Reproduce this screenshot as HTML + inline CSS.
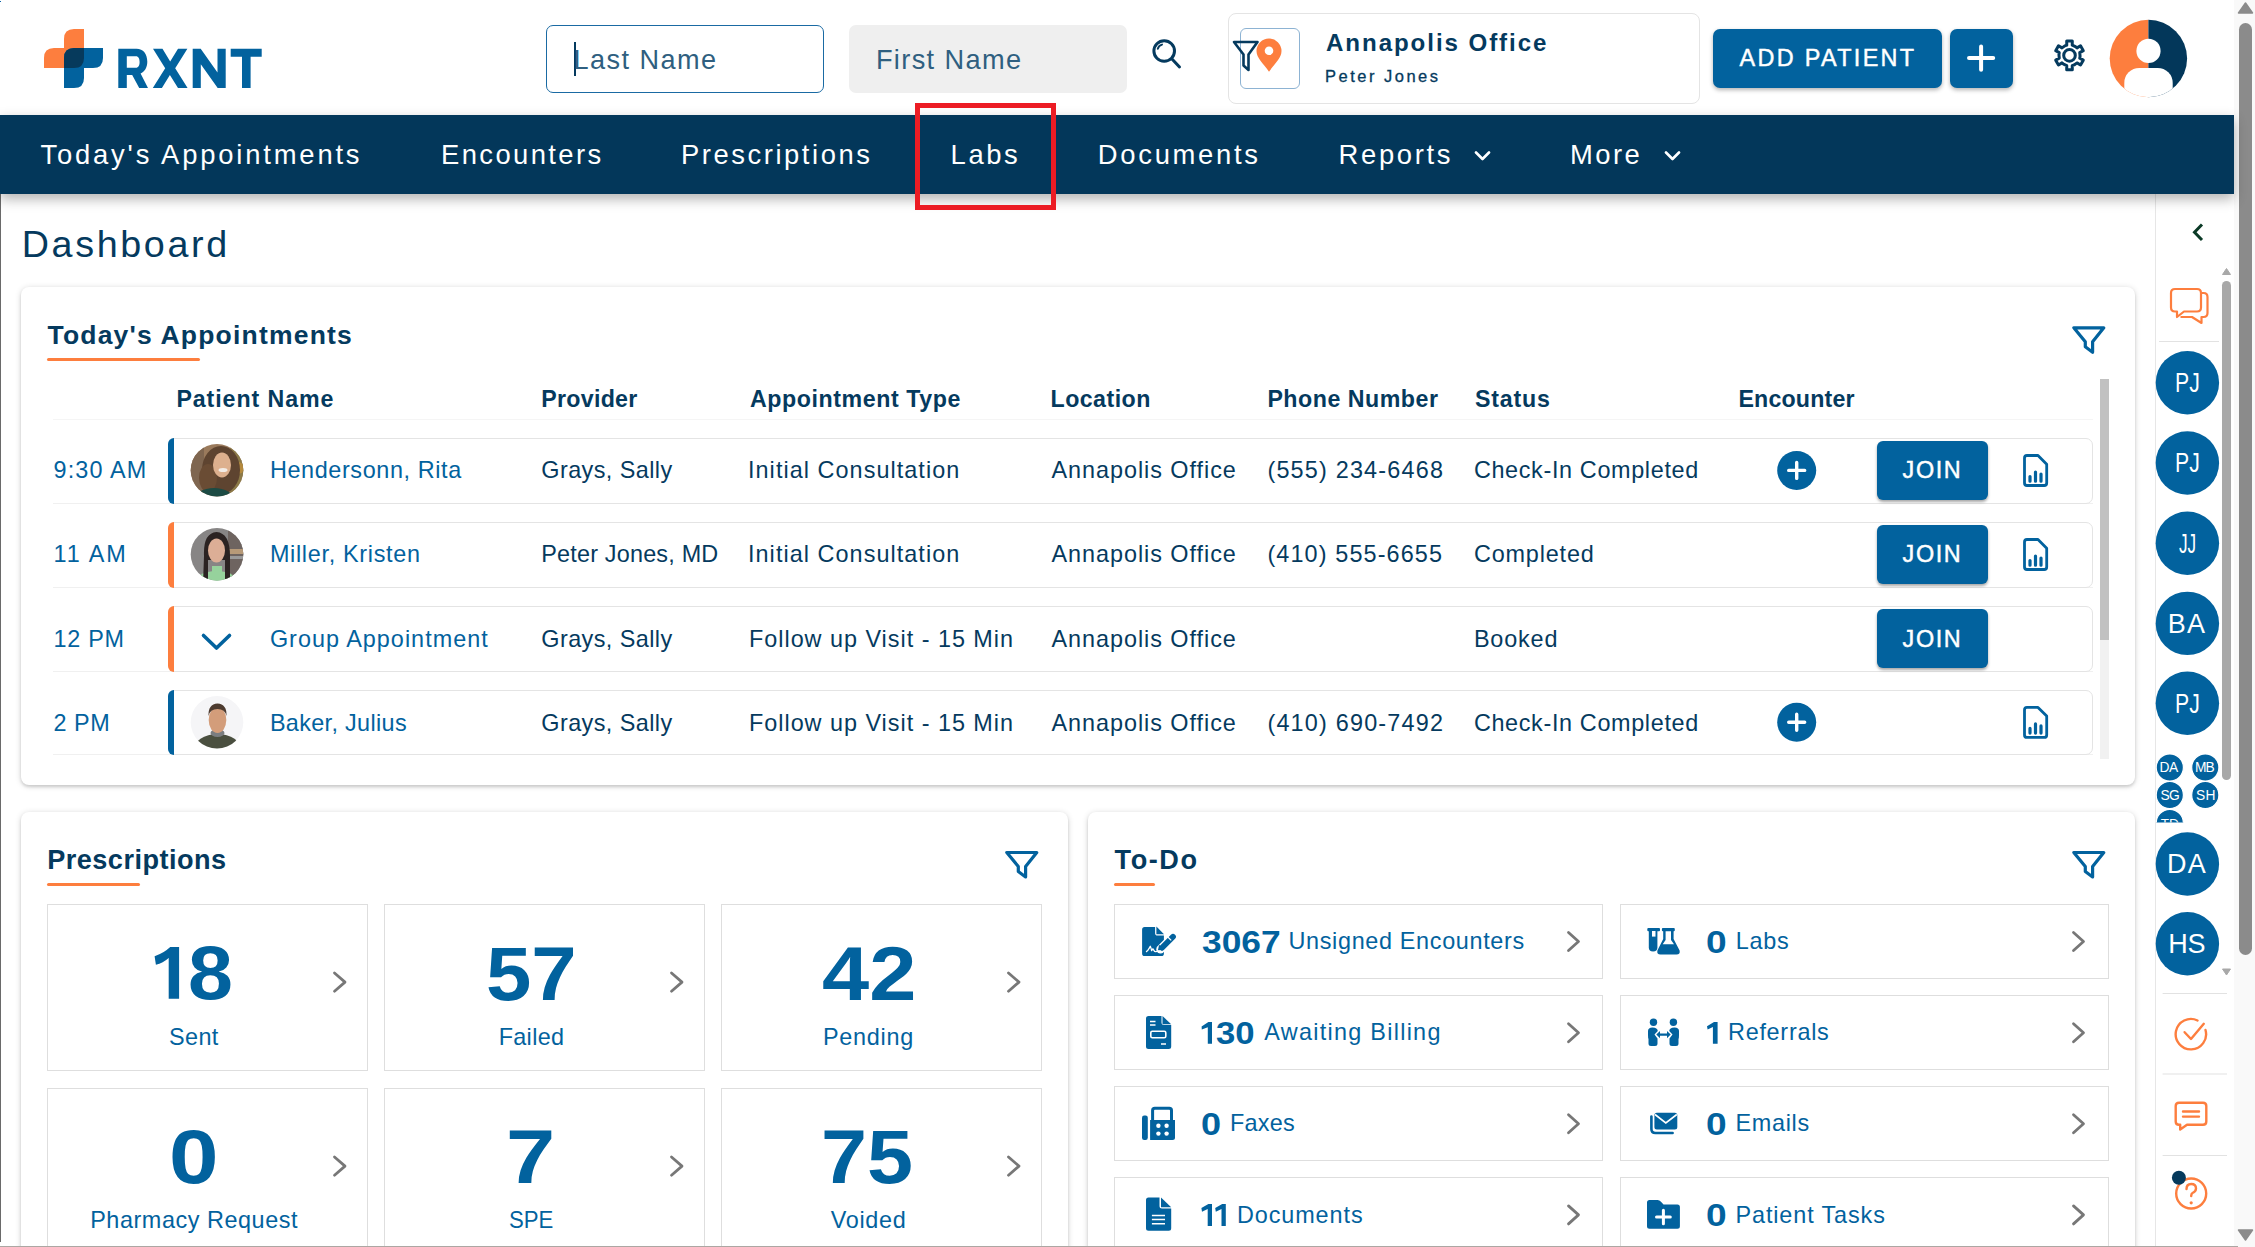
<!DOCTYPE html>
<html><head><meta charset="utf-8"><title>RXNT Dashboard</title>
<style>
*{margin:0;padding:0;box-sizing:border-box}
html,body{width:2255px;height:1247px;overflow:hidden;background:#fff;font-family:"Liberation Sans",sans-serif}
body{position:relative}
.a{position:absolute}
.t{position:absolute;white-space:nowrap;font-family:"Liberation Sans",sans-serif}
.card{position:absolute;background:#fff;border-radius:8px;box-shadow:0 1px 6px rgba(0,0,0,0.16),0 2px 3px rgba(0,0,0,0.12)}
.row{position:absolute;left:168px;width:1925px;height:66px;border:1px solid #e4e4e4;border-radius:7px;background:#fff}
.row .bar{position:absolute;left:-1px;top:-1px;bottom:-1px;width:6px;border-radius:7px 0 0 7px}
.rline{position:absolute;left:53px;width:2040px;height:1px;background:#f0f0f0}
.join{position:absolute;left:1877px;width:111px;height:59px;background:#02629e;border-radius:6px;box-shadow:0 2px 3px rgba(0,0,0,0.35)}
.tile{position:absolute;border:1px solid #dedede;background:#fff}
.sbar{position:absolute}
</style></head><body>
<div class="a" style="left:0;top:1px;width:1.2px;height:1.2px;background:#0a62a8"></div>
<!-- page background -->
<div class="a" style="left:0;top:194px;width:2155px;height:1053px;background:#fff"></div>
<div class="a" style="left:2155px;top:194px;width:79px;height:1053px;background:#fff;border-left:1px solid #e6e6e6"></div>
<!-- main scrollbar track -->
<div class="a" style="left:2234px;top:0;width:21px;height:1247px;background:#f9f9f9"></div>
<div class="a" style="left:2239px;top:23px;width:13px;height:932px;background:#8b8b8b;border-radius:6.5px"></div>
<!-- header inputs -->
<div class="a" style="left:546px;top:25px;width:278px;height:68px;border:1.5px solid #1a6aa3;border-radius:7px;background:#fff"></div>
<div class="a" style="left:574px;top:42px;width:2px;height:34px;background:#053a5e"></div>
<div class="a" style="left:849px;top:25px;width:278px;height:68px;background:#efefef;border-radius:7px"></div>
<!-- location card -->
<div class="a" style="left:1228px;top:13px;width:472px;height:91px;border:1px solid #e4e4e4;border-radius:8px;background:#fff"></div>
<div class="a" style="left:1240px;top:28px;width:60px;height:61px;border:1px solid #8db3d3;border-radius:6px;background:#fff"></div>
<!-- buttons -->
<div class="a" style="left:1713px;top:29px;width:229px;height:59px;background:#02629e;border-radius:7px;box-shadow:0 2px 4px rgba(0,0,0,0.3)"></div>
<div class="a" style="left:1950px;top:29px;width:63px;height:59px;background:#02629e;border-radius:7px;box-shadow:0 2px 4px rgba(0,0,0,0.3)"></div>
<!-- left dark line -->
<div class="a" style="left:0;top:194px;width:1px;height:1048px;background:#6a6a6a"></div>
<!-- nav -->
<div class="a" style="left:0;top:115px;width:2234px;height:79px;background:#03375a;box-shadow:0 5px 12px rgba(0,0,0,0.3)"></div>
<!-- red highlight box -->
<div class="a" style="left:915px;top:103px;width:141px;height:107px;border:5px solid #ec1c24"></div>

<!-- cards -->
<div class="card" style="left:21px;top:287px;width:2114px;height:498px"></div>
<div class="card" style="left:21px;top:812px;width:1047px;height:480px"></div>
<div class="card" style="left:1088px;top:812px;width:1047px;height:480px"></div>

<!-- orange underlines -->
<div class="a" style="left:47px;top:358px;width:153px;height:3px;background:#fd7e3e;border-radius:2px"></div>
<div class="a" style="left:47px;top:883px;width:93px;height:3px;background:#fd7e3e;border-radius:2px"></div>
<div class="a" style="left:1114px;top:883px;width:41px;height:3px;background:#fd7e3e;border-radius:2px"></div>

<!-- table -->
<div class="rline" style="top:419px;background:#f5f5f5"></div>
<div class="rline" style="top:503px"></div>
<div class="rline" style="top:587px"></div>
<div class="rline" style="top:671px"></div>
<div class="rline" style="top:754px"></div>
<div class="row" style="top:437.5px"><div class="bar" style="background:#02629e"></div></div>
<div class="row" style="top:521.5px"><div class="bar" style="background:#fd7e3e"></div></div>
<div class="row" style="top:605.5px"><div class="bar" style="background:#fd7e3e"></div></div>
<div class="row" style="top:689.5px;height:65px"><div class="bar" style="background:#02629e"></div></div>
<div class="join" style="top:441px"></div>
<div class="join" style="top:525px"></div>
<div class="join" style="top:609px"></div>
<!-- table scrollbar -->
<div class="a" style="left:2100px;top:379px;width:9px;height:380px;background:#f1f1f1"></div>
<div class="a" style="left:2100px;top:379px;width:9px;height:261px;background:#c1c1c1"></div>

<!-- prescriptions tiles -->
<div class="tile" style="left:47px;top:904px;width:321px;height:167px"></div>
<div class="tile" style="left:384px;top:904px;width:321px;height:167px"></div>
<div class="tile" style="left:721px;top:904px;width:321px;height:167px"></div>
<div class="tile" style="left:47px;top:1088px;width:321px;height:167px"></div>
<div class="tile" style="left:384px;top:1088px;width:321px;height:167px"></div>
<div class="tile" style="left:721px;top:1088px;width:321px;height:167px"></div>
<!-- todo tiles -->
<div class="tile" style="left:1114px;top:904px;width:489px;height:75px"></div>
<div class="tile" style="left:1620px;top:904px;width:489px;height:75px"></div>
<div class="tile" style="left:1114px;top:995px;width:489px;height:75px"></div>
<div class="tile" style="left:1620px;top:995px;width:489px;height:75px"></div>
<div class="tile" style="left:1114px;top:1086px;width:489px;height:75px"></div>
<div class="tile" style="left:1620px;top:1086px;width:489px;height:75px"></div>
<div class="tile" style="left:1114px;top:1177px;width:489px;height:75px"></div>
<div class="tile" style="left:1620px;top:1177px;width:489px;height:75px"></div>

<!-- bottom line -->
<div class="a" style="left:0;top:1245.6px;width:2238px;height:1.4px;background:#aca7a3"></div>

<svg class="a" style="left:0;top:0" width="2255" height="1247" viewBox="0 0 2255 1247">
<defs>
 <clipPath id="avc"><circle cx="2148.4" cy="58.5" r="38.7"/></clipPath>
 <clipPath id="sbclip"><rect x="2150" y="280" width="75" height="542.6"/></clipPath>
 <clipPath id="a1"><circle cx="217" cy="470.3" r="26.3"/></clipPath>
 <clipPath id="a2"><circle cx="217" cy="554.3" r="26.3"/></clipPath>
 <clipPath id="a4"><circle cx="217" cy="722.3" r="26.3"/></clipPath>
</defs>
<!-- logo -->
<path d="M64,39 Q64,29 74,29 H84 V58 Q84,68 74,68 H44 V58 Q44,48 54,48 H64 Z" fill="#fd7e3e"/>
<path d="M64,58 Q64,48 74,48 H103 V58 Q103,68 93,68 H84 V78 Q84,88 74,88 H64 Z" fill="#02629e"/>
<path d="M64,58 Q64,48 74,48 H84 V58 Q84,68 74,68 H64 Z" fill="#063a5c"/>
<g fill="#02629e">
 <path fill-rule="evenodd" d="M118.3,48.8 H136.5 C143.3,48.8 147.3,54 147.3,61.8 C147.3,67.6 144.6,71.8 140.6,73.6 L148,88 H139.2 L132.2,75 H126.8 V88 H118.3 Z M126.8,56.2 V67.8 H135.8 C138.6,67.8 139.6,65.2 139.6,62 C139.6,58.8 138.6,56.2 135.8,56.2 Z"/>
 <path d="M153,48.8 H162.5 L170.2,61.4 L178,48.8 H187.4 L175.2,68.2 L187.6,88 H178 L169.9,75 L161.9,88 H152.8 L165.2,68.2 Z"/>
 <path d="M192.7,48.8 H200.7 L217.5,72.5 V48.8 H225.7 V88 H217.7 L200.8,64.2 V88 H192.7 Z"/>
 <path d="M230.7,48.8 H261.7 V56.8 H250.6 V88 H242 V56.8 H230.7 Z"/>
</g>
<!-- search -->
<g fill="none" stroke="#053a5e" stroke-width="3" stroke-linecap="round">
 <circle cx="1164.2" cy="51" r="10.3"/>
 <path d="M1172,59 L1179.5,67"/>
 <path d="M1157.8,48.8 Q1158.6,45.6 1162,44.6" stroke-width="2"/>
</g>
<!-- location funnel + pin -->
<path d="M1234,42 H1257.5 L1248.5,54.5 V70 L1243.5,65.5 V54.5 Z" fill="none" stroke="#053a5e" stroke-width="2.6" stroke-linejoin="round"/>
<path d="M1269,71.7 C1263,63 1256.5,58 1256.5,51 A12.5,12.5 0 0 1 1281.5,51 C1281.5,58 1275,63 1269,71.7 Z" fill="#fd7e3e"/>
<circle cx="1269" cy="50.8" r="4.3" fill="#fff"/>
<!-- plus btn -->
<path d="M1969,58.1 H1993.2 M1981.1,46.4 V69.8" stroke="#fff" stroke-width="4" stroke-linecap="round"/>
<!-- gear -->
<path d="M2064.85,45.87 L2066.76,45.16 L2066.71,41.07 L2072.29,41.07 L2072.24,45.16 L2075.43,46.61 L2077.00,47.90 L2080.52,45.82 L2083.30,50.65 L2079.74,52.66 L2080.07,56.14 L2079.74,58.14 L2083.30,60.15 L2080.52,64.98 L2077.00,62.90 L2074.15,64.93 L2072.24,65.64 L2072.29,69.73 L2066.71,69.73 L2066.76,65.64 L2063.57,64.19 L2062.00,62.90 L2058.48,64.98 L2055.70,60.15 L2059.26,58.14 L2058.93,54.66 L2059.26,52.66 L2055.70,50.65 L2058.48,45.82 L2062.00,47.90 Z" fill="none" stroke="#053a5e" stroke-width="3" stroke-linejoin="round"/>
<circle cx="2069.5" cy="55.4" r="5.8" fill="none" stroke="#053a5e" stroke-width="3"/>
<!-- avatar -->
<g clip-path="url(#avc)">
 <rect x="2108" y="18" width="40.4" height="82" fill="#fd7e3e"/>
 <rect x="2148.4" y="18" width="40" height="82" fill="#03375a"/>
 <circle cx="2148.5" cy="50.9" r="12.1" fill="#fff"/>
 <rect x="2124.3" y="67.9" width="48.4" height="50" rx="15" fill="#fff"/>
</g>
<!-- nav chevrons -->
<path d="M1476,152.5 L1482.5,159 L1489,152.5 M1666,152.5 L1672.5,159 L1679,152.5" fill="none" stroke="#fff" stroke-width="2.6" stroke-linecap="round" stroke-linejoin="round"/>
<!-- filters -->
<g fill="none" stroke="#02629e" stroke-width="3.2" stroke-linejoin="round">
 <path id="flt" d="M1006.8,852.5 H1036.8 L1025.6,866.5 V877 L1018.3,871.5 V866.5 Z"/>
 <path d="M1006.8,852.5 H1036.8 L1025.6,866.5 V877 L1018.3,871.5 V866.5 Z" transform="translate(1067,0)"/>
 <path d="M1006.8,852.5 H1036.8 L1025.6,866.5 V877 L1018.3,871.5 V866.5 Z" transform="translate(1067,-524.7)"/>
</g>
<!-- table avatars -->
<g clip-path="url(#a1)">
 <rect x="190" y="443" width="54" height="54" fill="#9a7a5c"/>
 <rect x="190" y="443" width="14" height="54" fill="#7f6650"/>
 <rect x="230" y="443" width="14" height="54" fill="#8c7a48"/>
 <circle cx="238" cy="468" r="6" fill="#b58a3e"/>
 <ellipse cx="221" cy="470" rx="19" ry="24" fill="#5e4430"/>
 <ellipse cx="208" cy="478" rx="9" ry="14" fill="#6a4c34"/>
 <ellipse cx="222" cy="465" rx="9" ry="12.5" fill="#ddb08e"/>
 <ellipse cx="223" cy="470" rx="4.5" ry="2" fill="#f3ece6"/>
 <ellipse cx="214" cy="500" rx="20" ry="12" fill="#1c4b44"/>
</g>
<g clip-path="url(#a2)">
 <rect x="190" y="527" width="54" height="54" fill="#878585"/>
 <rect x="228" y="527" width="16" height="54" fill="#6e6460"/>
 <rect x="229" y="549" width="15" height="5" fill="#b79a78"/>
 <rect x="229" y="556" width="15" height="3" fill="#9a9a9a"/>
 <ellipse cx="216.5" cy="585" rx="23" ry="14" fill="#96d29c"/>
 <path d="M204,556 Q203,533 216.5,532 Q230,533 230,556 V584 H225 V560 H208 V584 H203 Z" fill="#2b2322"/>
 <ellipse cx="216.5" cy="550.5" rx="8.5" ry="12" fill="#dcae96"/>
 <rect x="212" y="566" width="10" height="15" fill="#96d29c"/>
</g>
<g clip-path="url(#a4)">
 <rect x="190" y="695" width="54" height="54" fill="#f5f5f7"/>
 <ellipse cx="217.5" cy="750" rx="24" ry="16" fill="#4a4f3f"/>
 <ellipse cx="217.5" cy="733" rx="7" ry="4" fill="#7a7d80"/>
 <ellipse cx="217.5" cy="720" rx="8.8" ry="13" fill="#d39d7a"/>
 <path d="M208.5,716 Q208,704 217.5,703.5 Q227,704 226.5,716 Q225,709 217.5,709 Q210,709 208.5,716 Z" fill="#4d3b30"/>
</g>
<!-- group chevron -->
<path d="M203.5,635.5 L216.5,648 L229.5,635.5" fill="none" stroke="#02629e" stroke-width="3.6" stroke-linecap="round" stroke-linejoin="round"/>
<!-- plus circles -->
<g>
 <circle cx="1796.7" cy="470.4" r="19.5" fill="#02629e"/>
 <path d="M1788.7,470.4 H1804.7 M1796.7,462.4 V478.4" stroke="#fff" stroke-width="3.4" stroke-linecap="round"/>
 <circle cx="1796.7" cy="722.3" r="19.5" fill="#02629e"/>
 <path d="M1788.7,722.3 H1804.7 M1796.7,714.3 V730.3" stroke="#fff" stroke-width="3.4" stroke-linecap="round"/>
</g>
<!-- doc chart icons -->
<g fill="none" stroke="#02629e" stroke-width="2.8" stroke-linecap="round" stroke-linejoin="round">
 <path d="M2027,455.5 H2038 L2046.7,464.2 V483 Q2046.7,485.5 2044.2,485.5 H2027 Q2024.5,485.5 2024.5,483 V458 Q2024.5,455.5 2027,455.5 Z"/><path d="M2030,476.5 V481.2 M2035.5,472 V481.2 M2041,474 V481.2" stroke-width="3.2"/>
 <path d="M2027,455.5 H2038 L2046.7,464.2 V483 Q2046.7,485.5 2044.2,485.5 H2027 Q2024.5,485.5 2024.5,483 V458 Q2024.5,455.5 2027,455.5 Z" transform="translate(0,84)"/><path d="M2030,476.5 V481.2 M2035.5,472 V481.2 M2041,474 V481.2" stroke-width="3.2" transform="translate(0,84)"/>
 <path d="M2027,455.5 H2038 L2046.7,464.2 V483 Q2046.7,485.5 2044.2,485.5 H2027 Q2024.5,485.5 2024.5,483 V458 Q2024.5,455.5 2027,455.5 Z" transform="translate(0,251.9)"/><path d="M2030,476.5 V481.2 M2035.5,472 V481.2 M2041,474 V481.2" stroke-width="3.2" transform="translate(0,251.9)"/>
</g>
<!-- tile chevrons -->
<g fill="none" stroke="#777" stroke-width="2.8" stroke-linecap="round" stroke-linejoin="round">
 <path d="M334.5,973 L345,982.1 L334.5,991.2"/>
 <path d="M334.5,973 L345,982.1 L334.5,991.2" transform="translate(337,0)"/>
 <path d="M334.5,973 L345,982.1 L334.5,991.2" transform="translate(674,0)"/>
 <path d="M334.5,973 L345,982.1 L334.5,991.2" transform="translate(0,184)"/>
 <path d="M334.5,973 L345,982.1 L334.5,991.2" transform="translate(337,184)"/>
 <path d="M334.5,973 L345,982.1 L334.5,991.2" transform="translate(674,184)"/>
 <path d="M1568.5,932.5 L1578.5,941.5 L1568.5,950.5"/>
 <path d="M1568.5,932.5 L1578.5,941.5 L1568.5,950.5" transform="translate(505,0)"/>
 <path d="M1568.5,932.5 L1578.5,941.5 L1568.5,950.5" transform="translate(0,91.3)"/>
 <path d="M1568.5,932.5 L1578.5,941.5 L1568.5,950.5" transform="translate(505,91.3)"/>
 <path d="M1568.5,932.5 L1578.5,941.5 L1568.5,950.5" transform="translate(0,182.3)"/>
 <path d="M1568.5,932.5 L1578.5,941.5 L1568.5,950.5" transform="translate(505,182.3)"/>
 <path d="M1568.5,932.5 L1578.5,941.5 L1568.5,950.5" transform="translate(0,273.4)"/>
 <path d="M1568.5,932.5 L1578.5,941.5 L1568.5,950.5" transform="translate(505,273.4)"/>
</g>
<g fill="#02629e">
 <!-- sign doc -->
 <path d="M1144.6,926.9 H1155.1 V933 Q1155.1,935.6 1157.7,935.6 H1163.9 V953.4 Q1163.9,956 1161.3,956 H1144.7 Q1142.1,956 1142.1,953.4 V929.5 Q1142.1,926.9 1144.6,926.9 Z"/>
 <path d="M1156.4,926.6 L1164,934.3 H1156.4 Z"/>
 <path d="M1173,936.8 L1160.5,949.3" stroke="#fff" stroke-width="8.4" stroke-linecap="round"/>
 <path d="M1173,936.8 L1162,947.8" stroke="#02629e" stroke-width="5.8" stroke-linecap="round"/>
 <path d="M1157.9,950.4 L1159.1,944.8 L1163.5,949.2 Z"/>
 <path d="M1165.8,935 L1171.2,940.4" stroke="#fff" stroke-width="1.3"/>
 <path d="M1146,951.8 Q1148,951 1149,948.6 L1150.3,946.2 Q1151.2,948.2 1151.6,950.6 L1152.9,948.8 L1154.6,951.3 Q1157,952 1158.6,950.6" fill="none" stroke="#fff" stroke-width="1.3" stroke-linejoin="round"/>
 <!-- billing doc -->
 <path d="M1148.5,1016 H1161.5 V1022.5 Q1161.5,1025 1164,1025 H1171.2 V1046.5 Q1171.2,1049 1168.7,1049 H1148.5 Q1146,1049 1146,1046.5 V1018.5 Q1146,1016 1148.5,1016 Z"/>
 <path d="M1162.5,1016 L1171.2,1024.2 H1162.5 Z"/>
 <g fill="none" stroke="#fff" stroke-width="1.6">
  <path d="M1150,1021.5 H1155.5 M1150,1025 H1155.5 M1161,1044 H1166"/>
  <rect x="1150.8" y="1031.2" width="15" height="6.6" rx="1.5"/>
 </g>
 <!-- fax -->
 <rect x="1142" y="1115.5" width="5.8" height="24.5" rx="2.2"/>
 <path d="M1150.1,1120 H1175 V1137.5 Q1175,1140 1172.5,1140 H1150.1 Z"/>
 <path d="M1152.6,1120 V1110.5 Q1152.6,1108.3 1154.8,1108.3 H1169.3 Q1171.5,1108.3 1171.5,1110.5 V1120" fill="none" stroke="#02629e" stroke-width="3"/>
 <g fill="#fff"><circle cx="1158.4" cy="1125.8" r="2.2"/><circle cx="1166.6" cy="1125.8" r="2.2"/><circle cx="1158.4" cy="1133.6" r="2.2"/><circle cx="1166.6" cy="1133.6" r="2.2"/></g>
 <!-- document -->
 <path d="M1148.5,1197.5 H1159.5 V1206 Q1159.5,1208.5 1162,1208.5 H1171.2 V1228.3 Q1171.2,1230.8 1168.7,1230.8 H1148.5 Q1146,1230.8 1146,1228.3 V1200 Q1146,1197.5 1148.5,1197.5 Z"/>
 <path d="M1161,1197.5 L1171.2,1207.2 H1161 Z"/>
 <path d="M1151.9,1215.4 H1165 M1151.9,1219.5 H1165 M1151.9,1223.7 H1165" stroke="#fff" stroke-width="1.5"/>
 <!-- labs -->
 <rect x="1647.3" y="928.1" width="12.7" height="3.2" rx="1"/>
 <path d="M1648.8,931 H1657.4 V947.5 Q1657.4,951.5 1653.1,951.5 Q1648.8,951.5 1648.8,947.5 Z"/>
 <rect x="1652" y="931" width="3.5" height="5.6" fill="#fff"/>
 <rect x="1661.9" y="928.1" width="12.9" height="3.2" rx="1"/>
 <path d="M1663.2,931 H1673.6 V939 L1679.6,950.5 Q1680.5,954.6 1676.5,954.6 H1660.5 Q1656.5,954.6 1657.4,950.5 L1663.2,939 Z"/>
 <path d="M1665.6,931.3 H1671 V940 L1674,944.2 H1662.7 L1665.6,940 Z" fill="#fff"/>
 <!-- referrals -->
 <circle cx="1653.5" cy="1022.3" r="3.7"/>
 <circle cx="1673.4" cy="1022.3" r="3.7"/>
 <path d="M1652.5,1027.5 Q1657.5,1027.5 1657.8,1031 L1654.5,1034.6 L1657.5,1038.5 V1043.5 Q1657.5,1046 1655,1046 H1651 Q1648.5,1046 1648.5,1043.5 V1039 Q1648,1038 1648,1035 V1031 Q1648,1027.5 1652.5,1027.5 Z"/>
 <path d="M1674.5,1027.5 Q1669.5,1027.5 1669.2,1031 L1672.5,1034.6 L1669.5,1038.5 V1043.5 Q1669.5,1046 1672,1046 H1676 Q1678.5,1046 1678.5,1043.5 V1039 Q1679,1038 1679,1035 V1031 Q1679,1027.5 1674.5,1027.5 Z"/>
 <path d="M1656.3,1034.6 L1660,1031 V1033.4 H1667 V1031 L1670.7,1034.6 L1667,1038.2 V1035.8 H1660 V1038.2 Z"/>
 <!-- email -->
 <path d="M1651.4,1116.5 V1129 Q1651.4,1133 1655.4,1133 H1672.6" fill="none" stroke="#02629e" stroke-width="2.6" stroke-linecap="round"/>
 <rect x="1654.4" y="1112.7" width="22.9" height="16.7" rx="2.5"/>
 <path d="M1655,1114.5 L1665.8,1123 L1676.8,1114.5" fill="none" stroke="#fff" stroke-width="1.6"/>
 <!-- folder plus -->
 <path d="M1649.5,1200 H1657.5 Q1659.5,1200 1661,1201.7 L1663.5,1204.5 H1677.4 Q1679.9,1204.5 1679.9,1207 V1226.2 Q1679.9,1228.7 1677.4,1228.7 H1649.5 Q1647,1228.7 1647,1226.2 V1202.5 Q1647,1200 1649.5,1200 Z"/>
 <path d="M1656.5,1217 H1670.3 M1663.4,1210.2 V1223.8" stroke="#fff" stroke-width="3" stroke-linecap="round"/>
</g>

<!-- sidebar chevron -->
<path d="M2202,224.5 L2194.5,232.2 L2202,240" fill="none" stroke="#0b3a26" stroke-width="3"/>
<!-- sidebar scrollbar -->
<path d="M2226.5,268.5 L2230.5,274.5 H2222.5 Z" fill="#a8a8a8" stroke="#a8a8a8" stroke-width="1" stroke-linejoin="round"/>
<rect x="2222" y="281" width="9" height="499" rx="4.5" fill="#a8a8a8"/>
<path d="M2226.5,975 L2230.5,969 H2222.5 Z" fill="#a8a8a8" stroke="#a8a8a8" stroke-width="1" stroke-linejoin="round"/>
<!-- chat icon -->
<g fill="none" stroke="#fd7e3e" stroke-width="2.2" stroke-linejoin="round">
 <path d="M2175,289 H2197 Q2201,289 2201,293 V307.5 Q2201,311.5 2197,311.5 H2184 L2177,317 V311.5 H2175 Q2171,311.5 2171,307.5 V293 Q2171,289 2175,289 Z"/>
 <path d="M2201,293 H2203.5 Q2207.5,293 2207.5,297 V313 Q2207.5,317 2203.5,317 H2201.5 V323 L2192,317 H2180.5"/>
</g>
<rect x="2159" y="341" width="60" height="1" fill="#e2e2e2"/>
<!-- avatars -->
<g fill="#02629e">
 <circle cx="2187.4" cy="382.7" r="31.7"/>
 <circle cx="2187.4" cy="463" r="31.7"/>
 <circle cx="2187.4" cy="543.2" r="31.7"/>
 <circle cx="2187.4" cy="623.4" r="31.7"/>
 <circle cx="2187.4" cy="703.3" r="31.7"/>
 <g clip-path="url(#sbclip)">
  <g stroke="#fff" stroke-width="1.2">
  <circle cx="2169.8" cy="823" r="13.6"/>
  <circle cx="2169.8" cy="795" r="13.6"/>
  <circle cx="2205.3" cy="795" r="13.6"/>
  <circle cx="2169.8" cy="767.5" r="13.6"/>
  <circle cx="2205.3" cy="767.5" r="13.6"/>
  </g>
  <text x="2169.8" y="827.5" fill="#fff" font-family="Liberation Sans" font-size="13.6" text-anchor="middle">TD</text>
 </g>
 <circle cx="2187.4" cy="864" r="31.7"/>
 <circle cx="2187.4" cy="943.8" r="31.7"/>
</g>
<rect x="2162.6" y="993" width="64.4" height="1" fill="#e2e2e2"/>
<rect x="2162.6" y="1073.5" width="64.4" height="1" fill="#e2e2e2"/>
<rect x="2162.6" y="1155" width="64.4" height="1" fill="#e2e2e2"/>
<g fill="none" stroke="#fd7e3e" stroke-width="2.4" stroke-linecap="round" stroke-linejoin="round">
 <path d="M2205.5,1030 A15.2,15.2 0 1 1 2197.5,1020.5"/>
 <path d="M2184.6,1032.2 L2191,1039 L2203.8,1023.8"/>
 <path d="M2179,1102.8 H2203 Q2206.3,1102.8 2206.3,1106.1 V1121.5 Q2206.3,1124.8 2203,1124.8 H2187 L2180.2,1129.6 V1124.8 H2179 Q2175.7,1124.8 2175.7,1121.5 V1106.1 Q2175.7,1102.8 2179,1102.8 Z"/>
 <path d="M2183,1111.5 H2199 M2183,1116.6 H2199"/>
 <circle cx="2191.2" cy="1193.5" r="15"/>
 <path d="M2186.5,1189 Q2186.5,1184 2191.2,1184 Q2196,1184 2196,1188.5 Q2196,1191.5 2192.5,1193 Q2191.2,1193.7 2191.2,1196"/>
</g>
<circle cx="2191.2" cy="1202.8" r="1.6" fill="#fd7e3e"/>
<circle cx="2178.9" cy="1177.7" r="7" fill="#063a5c"/>

<g fill="#02629e">
 <path d="M170.2,947 H179.1 V998.7 H168.7 V958 Q163,963 155.9,964.8 L154.6,956.2 Q164,953 170.2,947 Z"/>
 <path d="M1714,1022 H1717.6 V1043.8 H1712.9 V1027.1 L1707.6,1029.6 L1707,1026.2 Z"/>
 <path d="M1208.4,1022 H1212 V1043.8 H1207.8 V1027.3 L1201.8,1029.6 L1201.6,1026.4 Z"/>
 <path d="M1208.4,1204 H1212 V1225.9 H1207.7 V1209 L1202,1211.7 L1201.4,1208.1 Z"/>
 <path d="M1208.4,1204 H1212 V1225.9 H1207.7 V1209 L1202,1211.7 L1201.4,1208.1 Z" transform="translate(13.8,0)"/>
</g>
<!-- main scrollbar arrows -->
<path d="M2245.5,3 L2252.5,13 H2238.5 Z" fill="#8b8b8b" stroke="#8b8b8b" stroke-width="1.5" stroke-linejoin="round"/>
<path d="M2245.5,1240 L2252.5,1230 H2238.5 Z" fill="#8b8b8b" stroke="#8b8b8b" stroke-width="1.5" stroke-linejoin="round"/>
</svg>
<div class=t style="left:573.40px;top:46px;font-size:27.10px;line-height:27.10px;letter-spacing:1.457px;color:#2f5f80;">Last Name</div>
<div class=t style="left:875.90px;top:46px;font-size:27.20px;line-height:27.20px;letter-spacing:1.355px;color:#2f5f80;">First Name</div>
<div class=t style="left:1326.00px;top:31px;font-size:24.10px;line-height:24.10px;letter-spacing:1.931px;font-weight:700;color:#053a5e;">Annapolis Office</div>
<div class=t style="left:1325.00px;top:68px;font-size:16.50px;line-height:16.50px;letter-spacing:2.500px;color:#053a5e;-webkit-text-stroke:0.3px #053a5e;">Peter Jones</div>
<div class=t style="left:1739.50px;top:47px;font-size:23.40px;line-height:23.40px;letter-spacing:2.341px;color:#fff;-webkit-text-stroke:0.45px #fff;">ADD PATIENT</div>
<div class=t style="left:40.40px;top:141px;font-size:27.40px;line-height:27.40px;letter-spacing:2.820px;color:#fff;">Today's Appointments</div>
<div class=t style="left:441.00px;top:141px;font-size:27.40px;line-height:27.40px;letter-spacing:2.404px;color:#fff;">Encounters</div>
<div class=t style="left:681.00px;top:141px;font-size:27.40px;line-height:27.40px;letter-spacing:2.549px;color:#fff;">Prescriptions</div>
<div class=t style="left:950.60px;top:141px;font-size:27.40px;line-height:27.40px;letter-spacing:2.567px;color:#fff;">Labs</div>
<div class=t style="left:1097.80px;top:141px;font-size:27.40px;line-height:27.40px;letter-spacing:2.708px;color:#fff;">Documents</div>
<div class=t style="left:1338.60px;top:141px;font-size:27.40px;line-height:27.40px;letter-spacing:2.665px;color:#fff;">Reports</div>
<div class=t style="left:1570.00px;top:141px;font-size:27.40px;line-height:27.40px;letter-spacing:2.443px;color:#fff;">More</div>
<div class=t style="left:21.70px;top:226px;font-size:37.70px;line-height:37.70px;letter-spacing:2.649px;color:#053a5e;">Dashboard</div>
<div class=t style="left:47.50px;top:322px;font-size:26.50px;line-height:26.50px;letter-spacing:1.192px;font-weight:700;color:#053a5e;">Today's Appointments</div>
<div class=t style="left:176.40px;top:388px;font-size:23.20px;line-height:23.20px;letter-spacing:0.918px;font-weight:700;color:#053a5e;">Patient Name</div>
<div class=t style="left:541.30px;top:388px;font-size:23.20px;line-height:23.20px;letter-spacing:0.278px;font-weight:700;color:#053a5e;">Provider</div>
<div class=t style="left:749.90px;top:388px;font-size:23.20px;line-height:23.20px;letter-spacing:0.586px;font-weight:700;color:#053a5e;">Appointment Type</div>
<div class=t style="left:1050.50px;top:388px;font-size:23.20px;line-height:23.20px;letter-spacing:0.465px;font-weight:700;color:#053a5e;">Location</div>
<div class=t style="left:1267.40px;top:388px;font-size:23.20px;line-height:23.20px;letter-spacing:0.511px;font-weight:700;color:#053a5e;">Phone Number</div>
<div class=t style="left:1474.90px;top:388px;font-size:23.20px;line-height:23.20px;letter-spacing:0.826px;font-weight:700;color:#053a5e;">Status</div>
<div class=t style="left:1738.40px;top:388px;font-size:23.20px;line-height:23.20px;letter-spacing:0.183px;font-weight:700;color:#053a5e;">Encounter</div>
<div class=t style="left:53.50px;top:459px;font-size:23.40px;line-height:23.40px;letter-spacing:1.146px;color:#02629e;">9:30 AM</div>
<div class=t style="left:269.90px;top:459px;font-size:23.40px;line-height:23.40px;letter-spacing:0.619px;color:#02629e;">Hendersonn, Rita</div>
<div class=t style="left:541.30px;top:459px;font-size:23.40px;line-height:23.40px;letter-spacing:0.438px;color:#053a5e;">Grays, Sally</div>
<div class=t style="left:748.00px;top:459px;font-size:23.40px;line-height:23.40px;letter-spacing:1.057px;color:#053a5e;">Initial Consultation</div>
<div class=t style="left:1051.50px;top:459px;font-size:23.40px;line-height:23.40px;letter-spacing:0.960px;color:#053a5e;">Annapolis Office</div>
<div class=t style="left:1267.40px;top:459px;font-size:23.40px;line-height:23.40px;letter-spacing:1.197px;color:#053a5e;">(555) 234-6468</div>
<div class=t style="left:1473.90px;top:459px;font-size:23.40px;line-height:23.40px;letter-spacing:0.653px;color:#053a5e;">Check-In Completed</div>
<div class=t style="left:53.50px;top:543px;font-size:23.40px;line-height:23.40px;letter-spacing:1.905px;color:#02629e;">11 AM</div>
<div class=t style="left:269.90px;top:543px;font-size:23.40px;line-height:23.40px;letter-spacing:0.695px;color:#02629e;">Miller, Kristen</div>
<div class=t style="left:541.30px;top:543px;font-size:23.40px;line-height:23.40px;letter-spacing:0.193px;color:#053a5e;">Peter Jones, MD</div>
<div class=t style="left:748.00px;top:543px;font-size:23.40px;line-height:23.40px;letter-spacing:1.057px;color:#053a5e;">Initial Consultation</div>
<div class=t style="left:1051.50px;top:543px;font-size:23.40px;line-height:23.40px;letter-spacing:0.960px;color:#053a5e;">Annapolis Office</div>
<div class=t style="left:1267.40px;top:543px;font-size:23.40px;line-height:23.40px;letter-spacing:1.127px;color:#053a5e;">(410) 555-6655</div>
<div class=t style="left:1473.90px;top:543px;font-size:23.40px;line-height:23.40px;letter-spacing:0.849px;color:#053a5e;">Completed</div>
<div class=t style="left:53.50px;top:628px;font-size:23.40px;line-height:23.40px;letter-spacing:0.746px;color:#02629e;">12 PM</div>
<div class=t style="left:269.90px;top:628px;font-size:23.40px;line-height:23.40px;letter-spacing:1.016px;color:#02629e;">Group Appointment</div>
<div class=t style="left:541.30px;top:628px;font-size:23.40px;line-height:23.40px;letter-spacing:0.438px;color:#053a5e;">Grays, Sally</div>
<div class=t style="left:749.00px;top:628px;font-size:23.40px;line-height:23.40px;letter-spacing:0.985px;color:#053a5e;">Follow up Visit - 15 Min</div>
<div class=t style="left:1051.50px;top:628px;font-size:23.40px;line-height:23.40px;letter-spacing:0.960px;color:#053a5e;">Annapolis Office</div>
<div class=t style="left:1473.90px;top:628px;font-size:23.40px;line-height:23.40px;letter-spacing:0.835px;color:#053a5e;">Booked</div>
<div class=t style="left:53.50px;top:712px;font-size:23.40px;line-height:23.40px;letter-spacing:0.530px;color:#02629e;">2 PM</div>
<div class=t style="left:269.90px;top:712px;font-size:23.40px;line-height:23.40px;letter-spacing:0.340px;color:#02629e;">Baker, Julius</div>
<div class=t style="left:541.30px;top:712px;font-size:23.40px;line-height:23.40px;letter-spacing:0.438px;color:#053a5e;">Grays, Sally</div>
<div class=t style="left:749.00px;top:712px;font-size:23.40px;line-height:23.40px;letter-spacing:0.985px;color:#053a5e;">Follow up Visit - 15 Min</div>
<div class=t style="left:1051.50px;top:712px;font-size:23.40px;line-height:23.40px;letter-spacing:0.960px;color:#053a5e;">Annapolis Office</div>
<div class=t style="left:1267.40px;top:712px;font-size:23.40px;line-height:23.40px;letter-spacing:1.204px;color:#053a5e;">(410) 690-7492</div>
<div class=t style="left:1473.90px;top:712px;font-size:23.40px;line-height:23.40px;letter-spacing:0.653px;color:#053a5e;">Check-In Completed</div>
<div class=t style="left:1902.60px;top:459px;font-size:23.40px;line-height:23.40px;letter-spacing:1.604px;color:#fff;-webkit-text-stroke:0.45px #fff;">JOIN</div>
<div class=t style="left:1902.60px;top:543px;font-size:23.40px;line-height:23.40px;letter-spacing:1.604px;color:#fff;-webkit-text-stroke:0.45px #fff;">JOIN</div>
<div class=t style="left:1902.60px;top:628px;font-size:23.40px;line-height:23.40px;letter-spacing:1.604px;color:#fff;-webkit-text-stroke:0.45px #fff;">JOIN</div>
<div class=t style="left:47.20px;top:846px;font-size:27.10px;line-height:27.10px;letter-spacing:0.476px;font-weight:700;color:#053a5e;">Prescriptions</div>
<div class=t style="left:1114.60px;top:846px;font-size:27.10px;line-height:27.10px;letter-spacing:1.531px;font-weight:700;color:#053a5e;">To-Do</div>
<div class=t style="left:187.89px;top:935px;font-size:76.40px;line-height:76.40px;letter-spacing:0.000px;transform:scaleX(1.0564);transform-origin:0 0;font-weight:700;color:#02629e;">8</div>
<div class=t style="left:486.47px;top:936px;font-size:76.40px;line-height:76.40px;letter-spacing:0.000px;transform:scaleX(1.0673);transform-origin:0 0;font-weight:700;color:#02629e;">57</div>
<div class=t style="left:821.59px;top:936px;font-size:76.40px;line-height:76.40px;letter-spacing:0.000px;transform:scaleX(1.1106);transform-origin:0 0;font-weight:700;color:#02629e;">42</div>
<div class=t style="left:168.91px;top:1119px;font-size:76.40px;line-height:76.40px;letter-spacing:0.000px;transform:scaleX(1.1649);transform-origin:0 0;font-weight:700;color:#02629e;">0</div>
<div class=t style="left:506.23px;top:1119px;font-size:76.40px;line-height:76.40px;letter-spacing:0.000px;transform:scaleX(1.1568);transform-origin:0 0;font-weight:700;color:#02629e;">7</div>
<div class=t style="left:820.95px;top:1119px;font-size:76.40px;line-height:76.40px;letter-spacing:0.000px;transform:scaleX(1.0834);transform-origin:0 0;font-weight:700;color:#02629e;">75</div>
<div class=t style="left:169.00px;top:1026px;font-size:23.40px;line-height:23.40px;letter-spacing:0.394px;color:#02629e;">Sent</div>
<div class=t style="left:498.70px;top:1026px;font-size:23.40px;line-height:23.40px;letter-spacing:0.320px;color:#02629e;">Failed</div>
<div class=t style="left:822.90px;top:1026px;font-size:23.40px;line-height:23.40px;letter-spacing:0.761px;color:#02629e;">Pending</div>
<div class=t style="left:90.20px;top:1209px;font-size:23.40px;line-height:23.40px;letter-spacing:0.559px;color:#02629e;">Pharmacy Request</div>
<div class=t style="left:508.75px;top:1209px;font-size:23.40px;line-height:23.40px;letter-spacing:0.000px;transform:scaleX(0.9468);transform-origin:0 0;color:#02629e;">SPE</div>
<div class=t style="left:830.80px;top:1209px;font-size:23.40px;line-height:23.40px;letter-spacing:0.673px;color:#02629e;">Voided</div>
<div class=t style="left:1202.00px;top:926px;font-size:32.10px;line-height:32.10px;letter-spacing:0.000px;transform:scaleX(1.1018);transform-origin:0 0;font-weight:700;color:#02629e;">3067</div>
<div class=t style="left:1288.50px;top:930px;font-size:23.40px;line-height:23.40px;letter-spacing:0.669px;color:#02629e;">Unsigned Encounters</div>
<div class=t style="left:1706.34px;top:926px;font-size:32.10px;line-height:32.10px;letter-spacing:0.000px;transform:scaleX(1.1562);transform-origin:0 0;font-weight:700;color:#02629e;">0</div>
<div class=t style="left:1735.80px;top:930px;font-size:23.40px;line-height:23.40px;letter-spacing:0.725px;color:#02629e;">Labs</div>
<div class=t style="left:1216.00px;top:1017px;font-size:32.10px;line-height:32.10px;letter-spacing:0.000px;transform:scaleX(1.0821);transform-origin:0 0;font-weight:700;color:#02629e;">30</div>
<div class=t style="left:1264.30px;top:1021px;font-size:23.40px;line-height:23.40px;letter-spacing:1.281px;color:#02629e;">Awaiting Billing</div>
<div class=t style="left:1728.00px;top:1021px;font-size:23.40px;line-height:23.40px;letter-spacing:0.738px;color:#02629e;">Referrals</div>
<div class=t style="left:1201.28px;top:1108px;font-size:32.10px;line-height:32.10px;letter-spacing:0.000px;transform:scaleX(1.1250);transform-origin:0 0;font-weight:700;color:#02629e;">0</div>
<div class=t style="left:1230.00px;top:1112px;font-size:23.40px;line-height:23.40px;letter-spacing:0.250px;color:#02629e;">Faxes</div>
<div class=t style="left:1706.34px;top:1108px;font-size:32.10px;line-height:32.10px;letter-spacing:0.000px;transform:scaleX(1.1562);transform-origin:0 0;font-weight:700;color:#02629e;">0</div>
<div class=t style="left:1735.50px;top:1112px;font-size:23.40px;line-height:23.40px;letter-spacing:0.702px;color:#02629e;">Emails</div>
<div class=t style="left:1236.90px;top:1204px;font-size:23.40px;line-height:23.40px;letter-spacing:0.924px;color:#02629e;">Documents</div>
<div class=t style="left:1706.34px;top:1199px;font-size:32.10px;line-height:32.10px;letter-spacing:0.000px;transform:scaleX(1.1562);transform-origin:0 0;font-weight:700;color:#02629e;">0</div>
<div class=t style="left:1735.50px;top:1204px;font-size:23.40px;line-height:23.40px;letter-spacing:0.891px;color:#02629e;">Patient Tasks</div>
<div class=t style="left:2174.83px;top:370px;font-size:27.00px;line-height:27.00px;letter-spacing:0.000px;transform:scaleX(0.7855);transform-origin:0 0;color:#fff;">PJ</div>
<div class=t style="left:2174.83px;top:450px;font-size:27.00px;line-height:27.00px;letter-spacing:0.000px;transform:scaleX(0.7855);transform-origin:0 0;color:#fff;">PJ</div>
<div class=t style="left:2179.30px;top:531px;font-size:27.00px;line-height:27.00px;letter-spacing:0.000px;transform:scaleX(0.6353);transform-origin:0 0;color:#fff;">JJ</div>
<div class=t style="left:2167.75px;top:611px;font-size:27.00px;line-height:27.00px;letter-spacing:1.291px;color:#fff;">BA</div>
<div class=t style="left:2174.83px;top:691px;font-size:27.00px;line-height:27.00px;letter-spacing:0.000px;transform:scaleX(0.7855);transform-origin:0 0;color:#fff;">PJ</div>
<div class=t style="left:2167.05px;top:851px;font-size:27.00px;line-height:27.00px;letter-spacing:1.201px;color:#fff;">DA</div>
<div class=t style="left:2168.20px;top:931px;font-size:27.00px;line-height:27.00px;letter-spacing:-0.099px;color:#fff;">HS</div>
<div class=t style="left:2159.60px;top:761px;font-size:13.80px;line-height:13.80px;letter-spacing:-0.564px;color:#fff;">DA</div>
<div class=t style="left:2195.10px;top:761px;font-size:13.80px;line-height:13.80px;letter-spacing:-1.093px;color:#fff;">MB</div>
<div class=t style="left:2160.60px;top:789px;font-size:13.80px;line-height:13.80px;letter-spacing:-0.802px;color:#fff;">SG</div>
<div class=t style="left:2196.10px;top:789px;font-size:13.80px;line-height:13.80px;letter-spacing:0.198px;color:#fff;">SH</div>
</body></html>
